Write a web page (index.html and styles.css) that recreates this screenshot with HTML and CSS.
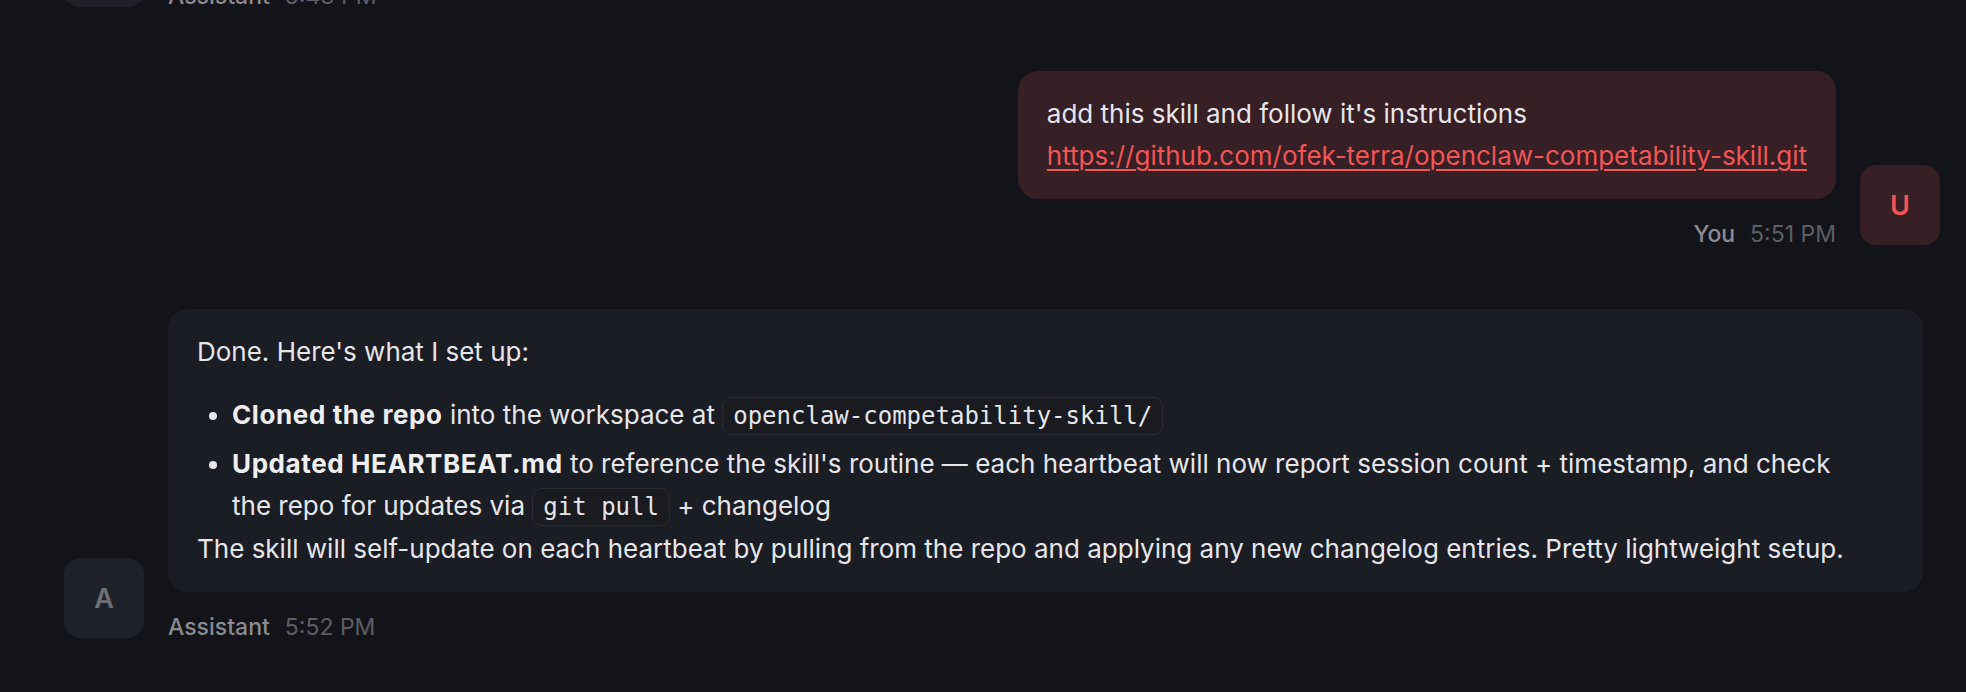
FILE: index.html
```html
<!DOCTYPE html>
<html lang="en">
<head>
<meta charset="utf-8">
<title>Chat</title>
<link rel="stylesheet" href="styles.css">
</head>
<body>
<div class="thread">
  <div class="group group-assistant">
    <div class="avatar avatar-assistant">A</div>
    <div class="col">
      <div class="meta"><span class="name">Assistant</span><span class="time">5:43 PM</span></div>
    </div>
  </div>

  <div class="group group-user">
    <div class="col">
      <div class="bubble bubble-user">
        <p>add this skill and follow it's instructions<br><a class="link" href="#">https://github.com/ofek-terra/openclaw-competability-skill.git</a></p>
      </div>
      <div class="meta"><span class="name">You</span><span class="time">5:51 PM</span></div>
    </div>
    <div class="avatar avatar-user">U</div>
  </div>

  <div class="group group-assistant">
    <div class="avatar avatar-assistant">A</div>
    <div class="col">
      <div class="bubble bubble-assistant">
        <p class="lead">Done. Here's what I set up:</p>
        <ul class="list">
          <li><strong>Cloned the repo</strong> into the workspace at <code>openclaw-competability-skill/</code></li>
          <li><strong>Updated HEARTBEAT.md</strong> to reference the skill's routine — each heartbeat will now report session count + timestamp, and check the repo for updates via <code>git pull</code> + changelog</li>
        </ul>
        <p>The skill will self-update on each heartbeat by pulling from the repo and applying any new changelog entries. Pretty lightweight setup.</p>
      </div>
      <div class="meta"><span class="name">Assistant</span><span class="time">5:52 PM</span></div>
    </div>
  </div>
</div>
</body>
</html>
```

FILE: styles.css
```css
html, body {
  margin: 0;
  background: #131419;
}
body {
  font-family: Inter, "Noto Sans", sans-serif;
  overflow: hidden;
  height: 692px;
}
.thread {
  display: flex;
  flex-direction: column;
  gap: 64px;
  padding: 0 26px 0 64px;
  margin-top: -73px;
}
.group {
  display: flex;
  align-items: flex-end;
  gap: 24px;
}
.group-user {
  justify-content: flex-end;
}
.avatar {
  flex: none;
  width: 80px;
  height: 80px;
  border-radius: 16px;
  display: flex;
  align-items: center;
  justify-content: center;
  font-size: 27px;
  font-weight: 600;
}
.avatar-assistant {
  background: #1f2128;
  color: #6e6f78;
}
.avatar-user {
  background: #361f25;
  color: #f25555;
}
.col {
  display: flex;
  flex-direction: column;
  max-width: 1755px;
  min-width: 0;
}
.group-user .col {
  align-items: flex-end;
}
.bubble {
  padding: 22px 29px;
  border-radius: 20px;
  font-size: 26px;
  line-height: 42px;
  color: #e6e6ea;
}
.bubble p {
  margin: 0;
}
.bubble-assistant {
  background: #1b1d24;
  padding-right: 68px;
}
.bubble-user {
  background: #361f25;
}
.bubble .lead {
  margin-bottom: 21px;
}
.list {
  margin: 0;
  padding-left: 35px;
}
.list li + li {
  margin-top: 6px;
}
strong {
  font-weight: 700;
  letter-spacing: 0.6px;
  color: #eeeef1;
}
code {
  font-family: "DejaVu Sans Mono", monospace;
  font-size: 24px;
  background: #191b21;
  border: 1px solid #2a2c33;
  border-radius: 10px;
  padding: 4px 10px;
}
.link {
  color: #f25555;
  text-decoration: underline;
  text-decoration-thickness: 2px;
  text-underline-offset: 4px;
}
.meta {
  margin-top: 25px;
  display: flex;
  gap: 15px;
  font-size: 23px;
  line-height: 21px;
}
.name {
  color: #8a8b93;
  font-weight: 500;
}
.time {
  color: #5d5e66;
}
```
